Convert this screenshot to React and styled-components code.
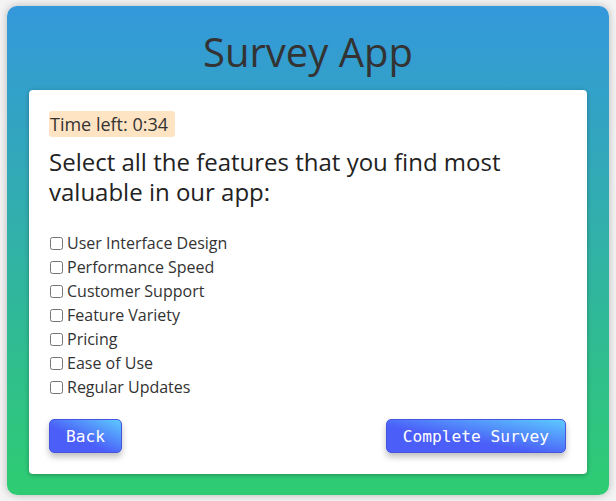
import React, { useState } from 'react';
import styled, { createGlobalStyle } from 'styled-components';

const GlobalStyle = createGlobalStyle`
    html, body {
        margin: 0;
        padding: 0;
        background-color: #f4f4f4;
        font-family: "Open Sans", "Noto Sans", sans-serif;
    }
    #root {
        padding: 6px 7px;
    }
`;

const Container = styled.div`
    height: 489px;
    box-sizing: border-box;
    padding: 8px 22px 21px;
    border-radius: 10px;
    background: linear-gradient(to bottom, #3498db, #2ecc71);
    box-shadow: 0 0 8px rgba(0, 0, 0, 0.25);
    display: flex;
    flex-direction: column;
`;

const Title = styled.h1`
    margin: 12px 0 12px;
    text-align: center;
    font-size: 40px;
    font-weight: 400;
    line-height: 52px;
    color: #333;
`;

const Card = styled.div`
    flex: 1;
    min-height: 0;
    background-color: #ffffff;
    border-radius: 4px;
    box-shadow: 0 1px 4px rgba(0, 0, 0, 0.3);
    padding: 21px 21px 21px 20px;
    display: flex;
    flex-direction: column;
`;

const Timer = styled.div`
    align-self: flex-start;
    height: 26px;
    box-sizing: border-box;
    background-color: #ffe4c4;
    border-radius: 3px;
    padding: 1px 7px 1px 1px;
    font-size: 18px;
    line-height: 24px;
    color: #333;
`;

const Question = styled.h2`
    margin: 10px 0 24px;
    font-size: 24px;
    font-weight: 400;
    line-height: 30px;
    color: #222;
`;

const OptionList = styled.div`
    display: flex;
    flex-direction: column;
`;

const Option = styled.label`
    display: flex;
    align-items: center;
    height: 24px;
    font-size: 16px;
    color: #333;
    input {
        margin: 0 4px 0 1px;
        width: 13px;
        height: 13px;
    }
`;

const Actions = styled.div`
    margin-top: 20px;
    display: flex;
    justify-content: space-between;
`;

const Button = styled.button`
    height: 34px;
    padding: 0 16px;
    border: 1px solid #4655e0;
    border-radius: 5px;
    background: linear-gradient(to top right, #4b5ef8 40%, #5ccaff);
    box-shadow: 0 4px 6px rgba(0, 0, 0, 0.25);
    color: #ffffff;
    font-family: "DejaVu Sans Mono", monospace;
    font-size: 16.2px;
    cursor: pointer;
`;

const features = [
    'User Interface Design',
    'Performance Speed',
    'Customer Support',
    'Feature Variety',
    'Pricing',
    'Ease of Use',
    'Regular Updates',
];

const App = () => {
    const [checked, setChecked] = useState({});

    const toggle = (name) => {
        setChecked({ ...checked, [name]: !checked[name] });
    };

    return (
        <>
            <GlobalStyle />
            <Container>
                <Title>Survey App</Title>
                <Card>
                    <Timer>Time left: 0:34</Timer>
                    <Question>
                        Select all the features that you find most valuable in our app:
                    </Question>
                    <OptionList>
                        {features.map((name) => (
                            <Option key={name}>
                                <input
                                    type="checkbox"
                                    checked={!!checked[name]}
                                    onChange={() => toggle(name)}
                                />
                                {name}
                            </Option>
                        ))}
                    </OptionList>
                    <Actions>
                        <Button>Back</Button>
                        <Button>Complete Survey</Button>
                    </Actions>
                </Card>
            </Container>
        </>
    );
};

export default App;
